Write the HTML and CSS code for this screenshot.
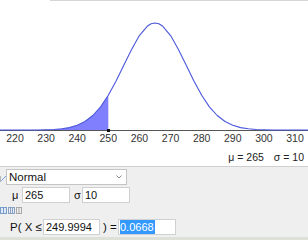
FILE: index.html
```html
<!DOCTYPE html>
<html lang="en">
<head>
  <meta charset="UTF-8" />
  <title>Normal distribution</title>
  <link rel="stylesheet" href="styles.css">
</head>
<body>

  <!-- Graph -->
  <div class="graph">
    <div class="top-line"></div>
    <svg class="plot" width="308" height="147" viewBox="0 1 308 147">
      <path class="area" d="M0,130 L15,130 L30.6,130 L46.1,129.8 L53.9,129.5 L61.7,128.8 L69.4,127.6 L77.2,125.3 L85,121.5 L92.8,115.5 L100.6,106.9 L108.3,95.3 L108.3,130 Z" />
      <line class="axis" x1="0" y1="130.5" x2="308" y2="130.5" />
      <path class="curve" d="M0,130 L30.6,130 L38.3,129.95 L46.1,129.8 L53.9,129.5 L61.7,128.8 L69.4,127.6 L77.2,125.3 L85,121.5 L92.8,115.5 L100.6,106.9 L108.3,95.3 L116.1,81 L123.9,65.1 L131.7,49.2 L139.4,35.6 L147.2,26.3 L151.1,23.8 L155,23 L158.9,23.8 L162.8,26.3 L170.6,35.6 L178.3,49.2 L186.1,65.1 L193.9,81 L201.7,95.3 L209.4,106.9 L217.2,115.5 L225,121.5 L232.8,125.3 L240.6,127.6 L248.3,128.8 L256.1,129.5 L263.9,129.8 L271.7,129.95 L279.4,130 L308,130" />
      <rect class="mark" x="107" y="129" width="3" height="3" />
      <g class="ticks">
        <text x="15" y="142">220</text>
        <text x="46.1" y="142">230</text>
        <text x="77.2" y="142">240</text>
        <text x="108.3" y="142">250</text>
        <text x="139.4" y="142">260</text>
        <text x="170.6" y="142">270</text>
        <text x="201.7" y="142">280</text>
        <text x="232.8" y="142">290</text>
        <text x="263.9" y="142">300</text>
        <text x="295" y="142">310</text>
      </g>
    </svg>
    <div class="legend">
      <span>μ = 265</span>
      <span>σ = 10</span>
    </div>
  </div>

  <!-- Controls -->
  <div class="panel">
    <div class="row">
      <svg class="dist-icon" width="6" height="8" viewBox="0 0 6 8">
        <line x1="0.5" y1="2" x2="0.5" y2="8" stroke="#b8b8b8" />
        <line x1="1" y1="7" x2="6" y2="2" stroke="#7aa6e0" />
      </svg>
      <div class="select">
        <span>Normal</span>
        <svg width="6" height="4" viewBox="0 0 6 4">
          <polyline points="0.5,0.5 3,3 5.5,0.5" fill="none" stroke="#888" />
        </svg>
      </div>
    </div>

    <div class="row params">
      <span class="label mu">μ</span>
      <div class="field small">265</div>
      <span class="label sigma">σ</span>
      <div class="field small">10</div>
    </div>

    <div class="row tools">
      <svg width="22" height="7" viewBox="0 0 22 7">
        <rect x="0.5" y="0.5" width="6" height="6" fill="#dce8f6" stroke="#7a9cc8" />
        <line x1="3.5" y1="1" x2="3.5" y2="6" stroke="#7a9cc8" />
        <rect x="8.5" y="0.5" width="6" height="6" fill="#e8eef6" stroke="#8aa0c0" />
        <line x1="10.5" y1="1" x2="10.5" y2="6" stroke="#8aa0c0" />
        <line x1="12.5" y1="1" x2="12.5" y2="6" stroke="#8aa0c0" />
        <rect x="16.5" y="0.5" width="5" height="6" fill="#eeeeee" stroke="#a8a8a8" />
        <line x1="19" y1="1" x2="19" y2="6" stroke="#a8a8a8" />
      </svg>
    </div>

    <div class="row prob">
      <span class="label">P( X ≤</span>
      <div class="field bound">249.9994</div>
      <span class="label eq">) =</span>
      <div class="field result"><span class="selected">0.0668</span></div>
    </div>
  </div>

  <div class="status"></div>

</body>
</html>
```

FILE: styles.css
```css
body {
  margin: 0;
  width: 308px;
  height: 240px;
  overflow: hidden;
  font-family: "Liberation Sans", Arial, sans-serif;
  background: #efefef;
}
.graph {
  background: white;
  height: 166px;
  border-bottom: 1px solid #cfcfcf;
}
.top-line {
  height: 1px;
  margin-left: 50px;
  background: #d6d6d6;
}
.plot {
  display: block;
}
.area {
  fill: #8080ff;
}
.axis {
  stroke: #555;
  stroke-width: 1;
}
.curve {
  fill: none;
  stroke: #4b58dc;
  stroke-width: 1.1;
  stroke-linejoin: round;
}
.mark {
  fill: #111;
}
.ticks text {
  font-family: "Liberation Sans", Arial, sans-serif;
  font-size: 10.5px;
  fill: #333;
  text-anchor: middle;
}
.legend {
  height: 18px;
  line-height: 18px;
  font-size: 10.5px;
  color: #222;
  display: flex;
  justify-content: flex-end;
  gap: 10px;
  padding-right: 4px;
}

.panel {
  height: 70px;
  padding-top: 2px;
  box-sizing: border-box;
  font-size: 11px;
  color: #111;
}
.row {
  display: flex;
  align-items: center;
}
.dist-icon {
  display: block;
  width: 6px;
  margin-top: 1px;
}
.select {
  width: 121px;
  height: 16px;
  box-sizing: border-box;
  background: white;
  border: 1px solid #c4c4c4;
  display: flex;
  align-items: center;
  justify-content: space-between;
  padding: 0 4px 0 2px;
  font-size: 11.5px;
}
.field {
  height: 16px;
  line-height: 14px;
  box-sizing: border-box;
  background: white;
  border: 1px solid #d0d0d0;
  padding: 0 2px;
}
.params {
  margin-top: 2px;
}
.params .mu {
  margin-left: 12px;
  width: 10px;
}
.params .sigma {
  margin-left: 4px;
  width: 8px;
}
.field.small {
  width: 48px;
}
.tools {
  margin-top: 4px;
  height: 7px;
}
.tools svg {
  display: block;
}
.prob {
  margin-top: 5px;
}
.prob .label {
  font-size: 11.5px;
}
.prob > .label:first-child {
  margin-left: 10px;
  width: 33px;
}
.field.bound {
  width: 57px;
  font-size: 11px;
}
.prob .eq {
  width: 18px;
  padding-left: 3px;
  box-sizing: border-box;
}
.field.result {
  width: 58px;
  padding: 0 0 0 1px;
}
.selected {
  display: inline-block;
  background: #3399ff;
  color: white;
  line-height: 14px;
  padding-right: 1px;
}
.status {
  height: 3px;
  background: #dde1d7;
}
```
